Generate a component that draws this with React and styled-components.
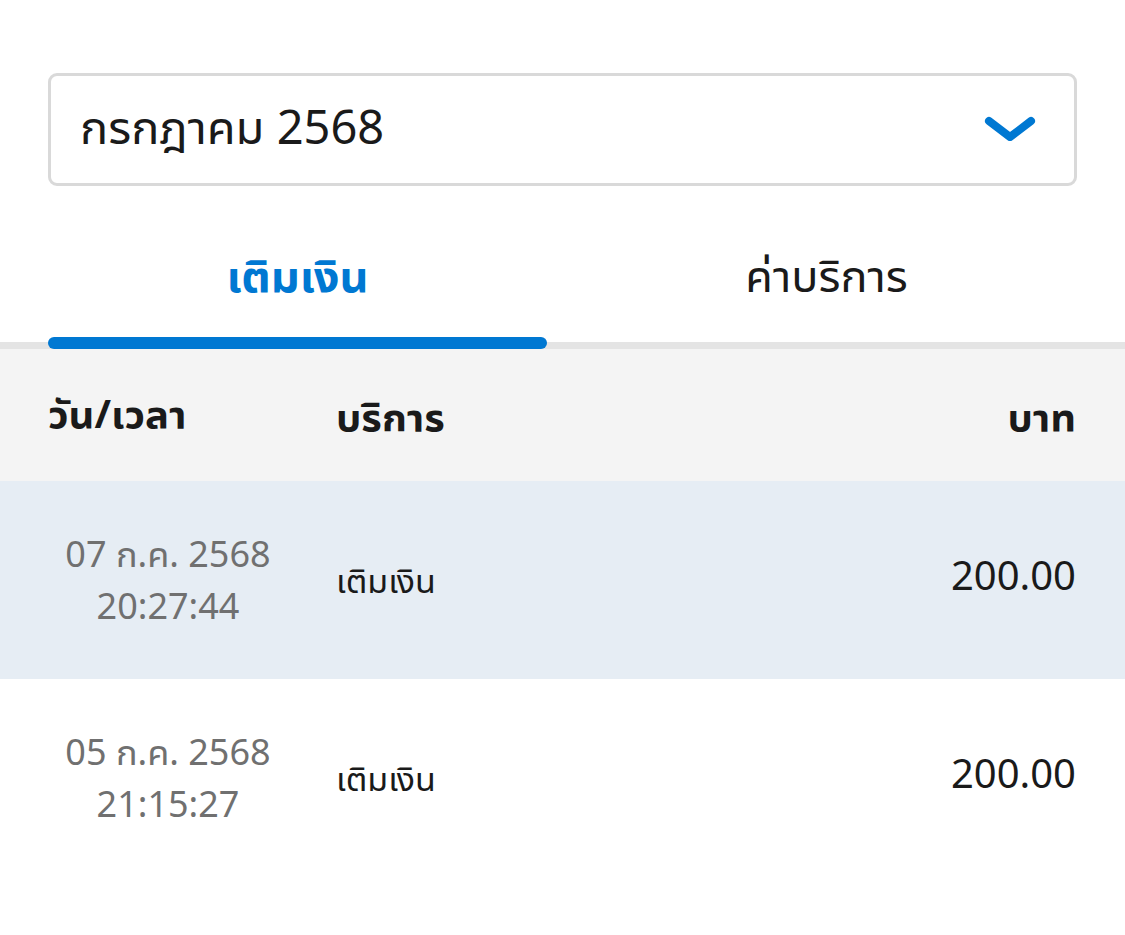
import React from 'react';
import styled, { createGlobalStyle } from 'styled-components';

const GlobalStyle = createGlobalStyle`
  body {
    margin: 0;
    background: #fff;
    font-family: "Noto Sans Thai UI", "Noto Sans Thai", "Noto Sans", "DejaVu Sans", sans-serif;
    color: #1a1a1a;
  }
`;

const Page = styled.div`
  width: 1125px;
  padding-top: 73px;
`;

const Select = styled.div`
  margin: 0 48px;
  height: 113px;
  box-sizing: border-box;
  border: 3px solid #d9d9d9;
  border-radius: 9px;
  display: flex;
  align-items: center;
  justify-content: space-between;
  padding: 0 38px 0 29px;
  font-size: 47px;
`;

const Tabs = styled.div`
  margin-top: 46px;
  padding: 0 48px;
  display: grid;
  grid-template-columns: 499px 1fr;
  column-gap: 29px;
  border-bottom: 7px solid #e4e4e4;
`;

const Tab = styled.div`
  position: relative;
  height: 110px;
  display: flex;
  justify-content: center;
  padding-top: 12px;
  box-sizing: border-box;
  font-size: 45px;
  font-weight: ${p => (p.$active ? 700 : 400)};
  color: ${p => (p.$active ? '#0078d2' : '#1a1a1a')};
  ${p => p.$active && `
    &::after {
      content: '';
      position: absolute;
      left: 0;
      right: 0;
      bottom: -7px;
      height: 12px;
      border-radius: 6px;
      background: #0078d2;
    }
  `}
`;

const Row = styled.div`
  display: grid;
  grid-template-columns: 240px 1fr auto;
  column-gap: 48px;
  align-items: center;
  padding: 0 49px 0 48px;
  height: ${p => p.$h}px;
  background: ${p => p.$bg || '#fff'};
`;

const HeadCell = styled.div`
  font-size: 40px;
  font-weight: 700;
  text-align: ${p => (p.$right ? 'right' : 'left')};
`;

const DateCell = styled.div`
  text-align: center;
  color: #707070;
  font-size: 36px;
  line-height: 52px;
`;

const Service = styled.div`
  font-size: 34px;
`;

const Amount = styled.div`
  font-size: 40px;
  text-align: right;
  margin-top: -6px;
`;

const rows = [
  { date: '07 ก.ค. 2568', time: '20:27:44', service: 'เติมเงิน', amount: '200.00', bg: '#e6edf4' },
  { date: '05 ก.ค. 2568', time: '21:15:27', service: 'เติมเงิน', amount: '200.00' },
];

function Chevron() {
  return (
    <svg width="52" height="28" viewBox="0 0 52 28" fill="none">
      <path d="M5 5 L26 21 L47 5" stroke="#0078d2" strokeWidth="8" strokeLinecap="round" strokeLinejoin="round" />
    </svg>
  );
}

export default function App() {
  return (
    <Page>
      <GlobalStyle />
      <Select>
        <span>กรกฎาคม 2568</span>
        <Chevron />
      </Select>
      <Tabs>
        <Tab $active>เติมเงิน</Tab>
        <Tab>ค่าบริการ</Tab>
      </Tabs>
      <Row $h={132} $bg="#f4f4f4">
        <HeadCell>วัน/เวลา</HeadCell>
        <HeadCell>บริการ</HeadCell>
        <HeadCell $right>บาท</HeadCell>
      </Row>
      {rows.map((r, i) => (
        <Row key={i} $h={198} $bg={r.bg}>
          <DateCell>{r.date}<br />{r.time}</DateCell>
          <Service>{r.service}</Service>
          <Amount>{r.amount}</Amount>
        </Row>
      ))}
    </Page>
  );
}
